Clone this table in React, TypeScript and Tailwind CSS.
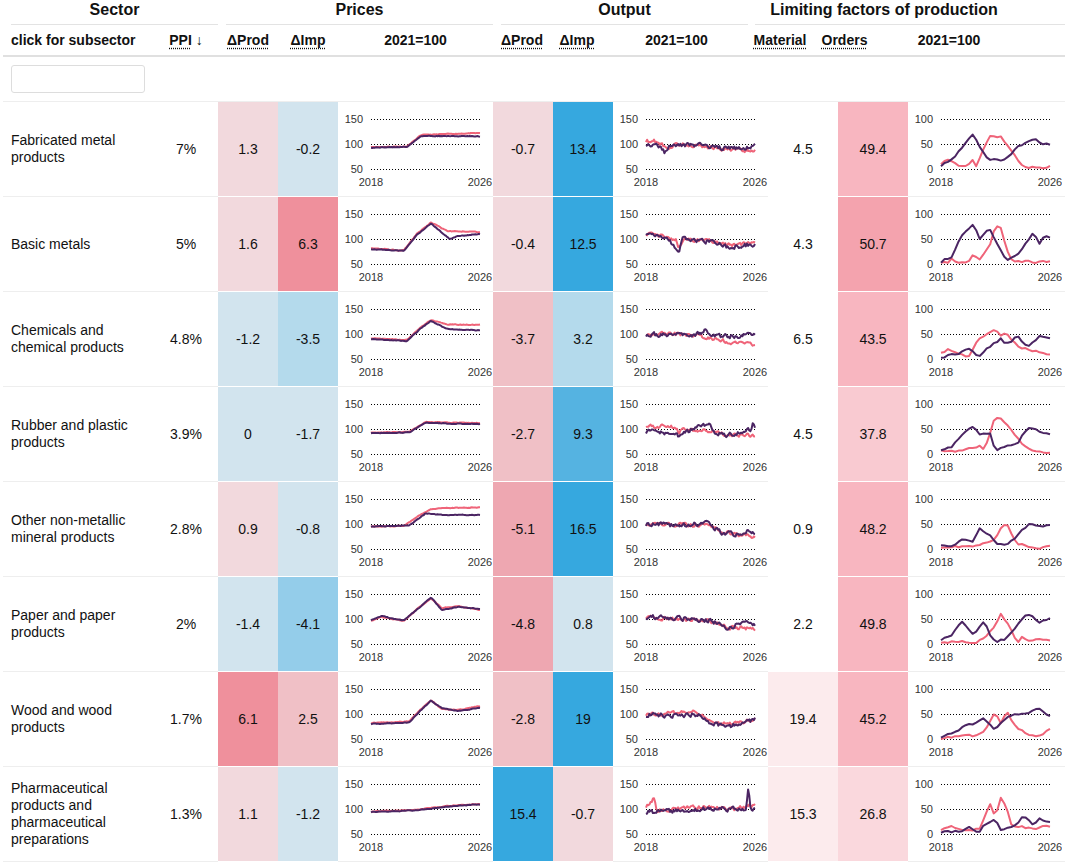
import React, { FC } from 'react';


//
// Sector table
//

type Pt = [number, number];

interface Cell {
    value: string,
    bg: string
}

interface Row {
    name: string,
    ppi: string,
    cells: Cell[],
    price: [Pt[], Pt[]],
    output: [Pt[], Pt[]],
    limit: [Pt[], Pt[]]
}

// colour scale

const P1 = 'bg-[#f2d9dd]';
const P2 = 'bg-[#f0c0c6]';
const P3 = 'bg-[#eea7b1]';
const P4 = 'bg-[#ef909c]';
const B1 = 'bg-[#d2e4ee]';
const B2 = 'bg-[#b4daec]';
const B3 = 'bg-[#94cdea]';
const B4 = 'bg-[#55b3e1]';
const B5 = 'bg-[#36a8df]';
const W = 'bg-white';
const M1 = 'bg-[#fcebed]';
const O1 = 'bg-[#f8b6c0]';
const O2 = 'bg-[#f4a3ae]';
const O3 = 'bg-[#f9cad1]';
const O4 = 'bg-[#fad8dd]';

const c = (value: string, bg: string): Cell => ({ value, bg });

const rows: Row[] = [
    {
        name: 'Fabricated metal products', ppi: '7%',
        cells: [c('1.3', P1), c('-0.2', B1), c('-0.7', P1), c('13.4', B5), c('4.5', W), c('49.4', O1)],
        price: [
            [[0, 94], [0.33, 95], [0.46, 118], [0.7, 120], [1, 122]],
            [[0, 93], [0.33, 94], [0.46, 116], [0.7, 116], [1, 115]]
        ],
        output: [
            [[0, 107], [0.1, 105], [0.2, 92], [0.3, 100], [0.5, 96], [0.7, 90], [1, 87]],
            [[0, 100], [0.12, 97], [0.17, 84], [0.22, 96], [0.5, 98], [0.6, 93], [0.75, 92], [0.9, 90], [1, 97]]
        ],
        limit: [
            [[0, 12], [0.07, 20], [0.15, 8], [0.25, 3], [0.28, 20], [0.32, 5], [0.4, 45], [0.45, 68], [0.55, 65], [0.62, 45], [0.7, 20], [0.75, 8], [0.85, 3], [1, 5]],
            [[0, 8], [0.1, 18], [0.2, 45], [0.3, 70], [0.35, 45], [0.42, 20], [0.5, 18], [0.55, 14], [0.62, 25], [0.7, 45], [0.85, 60], [0.95, 50], [1, 50]]
        ]
    },
    {
        name: 'Basic metals', ppi: '5%',
        cells: [c('1.6', P1), c('6.3', P4), c('-0.4', P1), c('12.5', B5), c('4.3', W), c('50.7', O2)],
        price: [
            [[0, 82], [0.3, 77], [0.42, 110], [0.55, 133], [0.7, 116], [1, 114]],
            [[0, 80], [0.3, 76], [0.42, 108], [0.55, 131], [0.72, 100], [0.8, 106], [1, 110]]
        ],
        output: [
            [[0, 112], [0.2, 103], [0.28, 96], [0.3, 80], [0.34, 100], [0.6, 96], [0.75, 88], [1, 90]],
            [[0, 112], [0.2, 100], [0.3, 76], [0.34, 100], [0.6, 94], [0.75, 84], [1, 90]]
        ],
        limit: [
            [[0, 5], [0.05, 2], [0.1, 10], [0.15, 3], [0.25, 3], [0.3, 20], [0.35, 5], [0.45, 40], [0.5, 75], [0.55, 70], [0.6, 30], [0.65, 5], [1, 5]],
            [[0, 5], [0.1, 15], [0.2, 60], [0.3, 80], [0.35, 50], [0.45, 70], [0.55, 25], [0.6, 5], [0.7, 20], [0.8, 50], [0.85, 65], [0.9, 40], [0.95, 55], [1, 50]]
        ]
    },
    {
        name: 'Chemicals and chemical products', ppi: '4.8%',
        cells: [c('-1.2', B1), c('-3.5', B2), c('-3.7', P2), c('3.2', B2), c('6.5', W), c('43.5', O1)],
        price: [
            [[0, 91], [0.33, 88], [0.45, 112], [0.55, 128], [0.7, 119], [1, 118]],
            [[0, 90], [0.33, 86], [0.45, 110], [0.55, 126], [0.7, 110], [1, 107]]
        ],
        output: [
            [[0, 101], [0.4, 99], [0.6, 92], [0.8, 82], [1, 78]],
            [[0, 99], [0.4, 98], [0.5, 102], [0.55, 112], [0.6, 95], [0.8, 96], [1, 97]]
        ],
        limit: [
            [[0, 15], [0.07, 20], [0.15, 10], [0.25, 5], [0.35, 40], [0.45, 55], [0.5, 60], [0.55, 45], [0.6, 50], [0.7, 25], [0.8, 20], [0.9, 15], [1, 10]],
            [[0, 5], [0.15, 10], [0.25, 25], [0.35, 5], [0.45, 25], [0.55, 40], [0.6, 30], [0.7, 45], [0.8, 25], [0.9, 45], [1, 40]]
        ]
    },
    {
        name: 'Rubber and plastic products', ppi: '3.9%',
        cells: [c('0', B1), c('-1.7', B1), c('-2.7', P2), c('9.3', B4), c('4.5', W), c('37.8', O3)],
        price: [
            [[0, 93], [0.35, 94], [0.5, 114], [0.7, 113], [1, 112]],
            [[0, 92], [0.35, 93], [0.5, 113], [0.7, 111], [1, 110]]
        ],
        output: [
            [[0, 107], [0.28, 103], [0.3, 92], [0.34, 100], [0.6, 96], [0.7, 90], [1, 87]],
            [[0, 95], [0.28, 92], [0.3, 86], [0.45, 102], [0.58, 110], [0.62, 92], [0.75, 88], [0.9, 95], [0.97, 100], [0.98, 116], [1, 104]]
        ],
        limit: [
            [[0, 10], [0.1, 5], [0.2, 5], [0.35, 15], [0.4, 10], [0.5, 75], [0.55, 70], [0.6, 60], [0.7, 30], [0.8, 10], [0.9, 5], [1, 5]],
            [[0, 10], [0.1, 15], [0.2, 40], [0.3, 55], [0.35, 40], [0.45, 45], [0.5, 5], [0.6, 15], [0.7, 20], [0.8, 55], [0.9, 45], [1, 40]]
        ]
    },
    {
        name: 'Other non-metallic mineral products', ppi: '2.8%',
        cells: [c('0.9', P1), c('-0.8', B1), c('-5.1', P3), c('16.5', B5), c('0.9', W), c('48.2', O1)],
        price: [
            [[0, 95], [0.3, 96], [0.45, 118], [0.55, 130], [0.7, 132], [1, 133]],
            [[0, 95], [0.35, 97], [0.5, 121], [0.7, 118], [1, 118]]
        ],
        output: [
            [[0, 101], [0.4, 98], [0.55, 100], [0.7, 86], [0.85, 78], [1, 75]],
            [[0, 100], [0.4, 97], [0.55, 104], [0.7, 82], [0.85, 78], [0.9, 86], [1, 84]]
        ],
        limit: [
            [[0, 5], [0.2, 5], [0.3, 5], [0.4, 10], [0.5, 20], [0.55, 40], [0.6, 50], [0.65, 30], [0.7, 10], [0.8, 5], [1, 3]],
            [[0, 10], [0.1, 5], [0.2, 20], [0.3, 15], [0.35, 40], [0.45, 30], [0.5, 10], [0.6, 5], [0.7, 25], [0.8, 50], [0.9, 45], [1, 50]]
        ]
    },
    {
        name: 'Paper and paper products', ppi: '2%',
        cells: [c('-1.4', B1), c('-4.1', B3), c('-4.8', P3), c('0.8', B1), c('2.2', W), c('49.8', O1)],
        price: [
            [[0, 97], [0.1, 104], [0.2, 100], [0.3, 96], [0.45, 125], [0.55, 141], [0.65, 122], [0.8, 126], [1, 118]],
            [[0, 98], [0.1, 106], [0.2, 101], [0.3, 97], [0.45, 124], [0.55, 143], [0.65, 118], [0.8, 124], [1, 120]]
        ],
        output: [
            [[0, 104], [0.4, 98], [0.6, 95], [0.75, 84], [1, 80]],
            [[0, 105], [0.4, 100], [0.6, 96], [0.75, 82], [0.85, 90], [1, 90]]
        ],
        limit: [
            [[0, 5], [0.2, 5], [0.3, 3], [0.4, 10], [0.5, 40], [0.55, 60], [0.6, 45], [0.7, 5], [0.75, 15], [0.8, 5], [0.9, 10], [1, 5]],
            [[0, 10], [0.1, 20], [0.2, 45], [0.3, 20], [0.4, 50], [0.45, 20], [0.5, 5], [0.6, 10], [0.7, 40], [0.8, 60], [0.9, 45], [1, 50]]
        ]
    },
    {
        name: 'Wood and wood products', ppi: '1.7%',
        cells: [c('6.1', P4), c('2.5', P2), c('-2.8', P2), c('19', B5), c('19.4', M1), c('45.2', O1)],
        price: [
            [[0, 82], [0.35, 85], [0.45, 108], [0.55, 128], [0.65, 110], [0.8, 108], [1, 116]],
            [[0, 80], [0.35, 83], [0.45, 106], [0.55, 127], [0.65, 112], [0.8, 106], [1, 112]]
        ],
        output: [
            [[0, 100], [0.3, 102], [0.45, 104], [0.55, 96], [0.6, 82], [0.8, 80], [1, 88]],
            [[0, 98], [0.3, 97], [0.5, 100], [0.58, 84], [0.7, 75], [0.85, 78], [1, 90]]
        ],
        limit: [
            [[0, 2], [0.2, 5], [0.3, 5], [0.4, 15], [0.5, 55], [0.55, 30], [0.6, 55], [0.7, 20], [0.8, 10], [0.9, 5], [1, 20]],
            [[0, 5], [0.1, 10], [0.2, 25], [0.3, 30], [0.4, 40], [0.5, 20], [0.6, 40], [0.7, 50], [0.8, 50], [0.9, 60], [1, 45]]
        ]
    },
    {
        name: 'Pharmaceutical products and pharmaceutical preparations', ppi: '1.3%',
        cells: [c('1.1', P1), c('-1.2', B1), c('15.4', B5), c('-0.7', P1), c('15.3', M1), c('26.8', O4)],
        price: [
            [[0, 95], [0.4, 98], [0.7, 106], [1, 110]],
            [[0, 94], [0.4, 97], [0.7, 105], [1, 109]]
        ],
        output: [
            [[0, 106], [0.04, 110], [0.07, 122], [0.1, 98], [0.5, 104], [0.8, 100], [1, 108]],
            [[0, 94], [0.1, 94], [0.5, 100], [0.92, 100], [0.94, 146], [0.96, 102], [1, 100]]
        ],
        limit: [
            [[0, 10], [0.1, 15], [0.2, 5], [0.35, 10], [0.45, 60], [0.5, 35], [0.55, 72], [0.6, 50], [0.65, 15], [0.75, 15], [0.85, 10], [0.9, 15], [1, 15]],
            [[0, 5], [0.2, 5], [0.25, 15], [0.35, 5], [0.4, 20], [0.5, 30], [0.55, 5], [0.6, 15], [0.7, 20], [0.75, 35], [0.8, 30], [0.85, 20], [0.9, 30], [1, 25]]
        ]
    }
];


//
// series helpers
//

function rng(seed: number) {
    let s = seed;
    return () => {
        s = (s * 16807) % 2147483647;
        return s / 2147483647;
    };
}

function interp(anchors: Pt[], t: number): number {
    for (let i = 1; i < anchors.length; i++) {
        const [t0, v0] = anchors[i - 1];
        const [t1, v1] = anchors[i];
        if (t <= t1) {
            return v0 + (v1 - v0) * (t - t0) / (t1 - t0 || 1);
        }
    }
    return anchors[anchors.length - 1][1];
}

function series(anchors: Pt[], n: number, noise: number, seed: number): number[] {
    const r = rng(seed);
    let e = 0;
    const out: number[] = [];
    for (let i = 0; i < n; i++) {
        e = 0.4 * e + noise * (r() * 2 - 1);
        out.push(interp(anchors, i / (n - 1)) + e);
    }
    return out;
}


//
// Chart
//

interface ChartProps {
    share?: boolean,
    lines: [number[], number[]],
    width?: number
}

const Chart: FC<ChartProps> = ({ share, lines, width = 155 }) => {

    const y = (v: number) => share ? 67 - Math.max(v, 0) * 0.5 : 42 - (v - 100) * 0.5;
    const labels = share ? ['100', '50', '0'] : ['150', '100', '50'];

    const path = (vs: number[]) => vs.map((v, i) =>
        (i ? 'L' : 'M') + (33 + i / (vs.length - 1) * 109).toFixed(1) + ',' + y(v).toFixed(1)
    ).join('');

    return (
        <svg width={width} height={94} className="block">
            {[17, 42, 67].map((ly, i) =>
                <g key={ly}>
                    <line x1={33} x2={142} y1={ly + 0.5} y2={ly + 0.5} stroke="#000" strokeDasharray="1 2" />
                    <text x={25} y={ly + 4} textAnchor="end" fontSize={11} fill="#333">{labels[i]}</text>
                </g>
            )}
            <text x={33} y={84} textAnchor="middle" fontSize={11} fill="#333">2018</text>
            <text x={142} y={84} textAnchor="middle" fontSize={11} fill="#333">2026</text>
            <path d={path(lines[0])} fill="none" stroke="#ef6479" strokeWidth={2} strokeLinejoin="round" />
            <path d={path(lines[1])} fill="none" stroke="#4b2563" strokeWidth={2} strokeLinejoin="round" />
        </svg>
    );

};


//
// cells
//

const ValueCell: FC<{ cell: Cell, w: string }> = ({ cell, w }) => (
    <div className={`${w} ${cell.bg} flex items-center justify-center border-b border-white`}>{cell.value}</div>
);

const Dotted: FC<{ children: React.ReactNode }> = ({ children }) => (
    <span className="underline decoration-dotted underline-offset-[3px]">{children}</span>
);


//
// App
//

export default function App() {

    return (
        <div className="w-[1065px] bg-white text-[#111] text-[14px]" style={{ fontFamily: '"Liberation Sans", Arial, sans-serif' }}>

            {/* group headers */}
            <div className="flex h-[25px] text-[16px] font-bold">
                <div className="ml-[11px] w-[207px] text-center leading-[20px] border-b border-[#e3e3e3]">Sector</div>
                <div className="ml-[8px] w-[267px] text-center leading-[20px] border-b border-[#e3e3e3]">Prices</div>
                <div className="ml-[8px] w-[247px] text-center leading-[20px] border-b border-[#e3e3e3]">Output</div>
                <div className="ml-[7px] w-[310px] pr-[52px] text-center leading-[20px] border-b border-[#e3e3e3]">Limiting factors of production</div>
            </div>

            {/* column headers */}
            <div className="ml-[3px] flex h-[32px] items-center text-[14px] font-bold border-b-2 border-[#e0e0e0]">
                <div className="w-[151px] pl-[8px]">click for subsector</div>
                <div className="w-[64px] text-center"><Dotted>PPI</Dotted> ↓</div>
                <div className="w-[60px] text-center"><Dotted>ΔProd</Dotted></div>
                <div className="w-[60px] text-center"><Dotted>ΔImp</Dotted></div>
                <div className="w-[155px] text-center">2021=100</div>
                <div className="w-[58px] text-center"><Dotted>ΔProd</Dotted></div>
                <div className="w-[52px] text-center"><Dotted>ΔImp</Dotted></div>
                <div className="w-[147px] text-center">2021=100</div>
                <div className="w-[60px] text-center"><Dotted>Material</Dotted></div>
                <div className="w-[69px] text-center"><Dotted>Orders</Dotted></div>
                <div className="w-[140px] text-center">2021=100</div>
            </div>

            {/* filter */}
            <div className="ml-[3px] h-[45px] flex items-center border-b border-[#eee]">
                <input className="ml-[8px] w-[134px] h-[28px] border border-[#ddd] rounded-[3px] outline-none" />
            </div>

            {/* rows */}
            {rows.map((row, i) =>
                <div key={row.name} className="ml-[3px] flex h-[95px]">
                    <div className="w-[151px] pl-[8px] pr-[10px] flex items-center leading-[17px] border-b border-[#eee]">{row.name}</div>
                    <div className="w-[64px] flex items-center justify-center border-b border-[#eee]">{row.ppi}</div>
                    <ValueCell cell={row.cells[0]} w="w-[60px]" />
                    <ValueCell cell={row.cells[1]} w="w-[60px]" />
                    <div className="w-[155px] border-b border-[#eee]">
                        <Chart lines={[series(row.price[0], 96, 0.6, 11 + i), series(row.price[1], 96, 0.6, 31 + i)]} />
                    </div>
                    <ValueCell cell={row.cells[2]} w="w-[60px]" />
                    <ValueCell cell={row.cells[3]} w="w-[60px]" />
                    <div className="w-[155px] border-b border-[#eee]">
                        <Chart lines={[series(row.output[0], 96, 3.4, 53 + i), series(row.output[1], 96, 4, 79 + i)]} />
                    </div>
                    <ValueCell cell={row.cells[4]} w="w-[70px]" />
                    <ValueCell cell={row.cells[5]} w="w-[70px]" />
                    <div className="flex-1 border-b border-[#eee]">
                        <Chart share width={154} lines={[series(row.limit[0], 32, 2.5, 97 + i), series(row.limit[1], 32, 2.5, 113 + i)]} />
                    </div>
                </div>
            )}

        </div>
    );

}
